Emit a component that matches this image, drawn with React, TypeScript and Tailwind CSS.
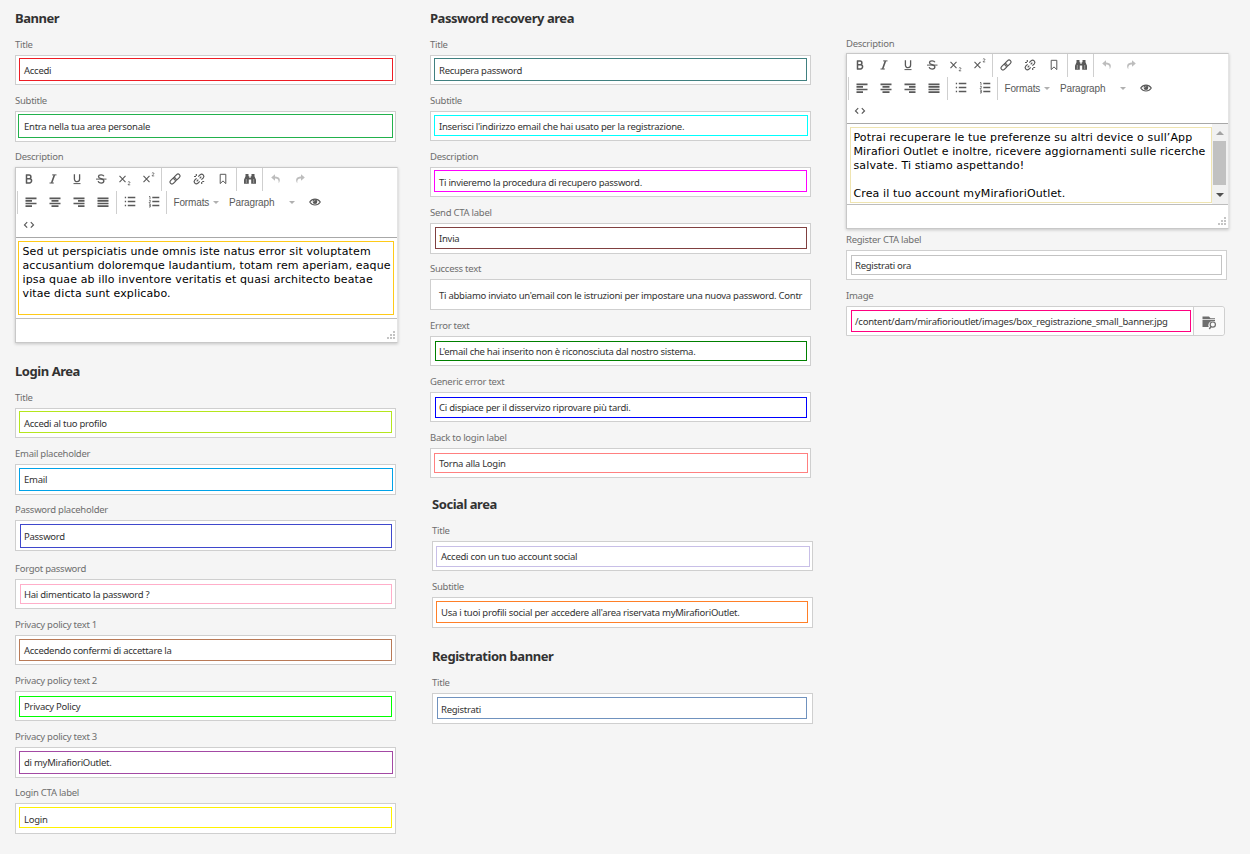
import type { ReactNode } from "react";

type FieldProps = {
  label: string;
  value: string;
  /** Box height and space below it */
  box: string;
  /** Margins and colour of the highlight frame inside the box */
  frame: string;
  text?: string;
};

const labelClass =
  "h-5 whitespace-nowrap text-[9.5px] leading-[20px] tracking-[-0.26px] text-[#6e6e6e]";
const valueClass =
  "[grid-area:1/1] whitespace-nowrap text-[9.5px] leading-[15px] text-[#323232]";

function Field({ label, value, box, frame, text = "mt-2" }: FieldProps) {
  return (
    <div>
      <div className={labelClass}>{label}</div>
      <div className={`grid w-[381px] border border-[#cfcfcf] bg-white ${box}`}>
        <div className={`[grid-area:1/1] border ${frame}`} />
        <div className={`${valueClass} ml-2 mr-1.5 tracking-[-0.26px] ${text}`}>{value}</div>
      </div>
    </div>
  );
}

function Heading({ children }: { children: ReactNode }) {
  return (
    <h2 className="h-[18px] whitespace-nowrap text-[13px] font-bold leading-[18px] tracking-[-0.45px] text-[#323232]">
      {children}
    </h2>
  );
}

function Icon({ children, faded }: { children: ReactNode; faded?: boolean }) {
  return (
    <span
      className={`flex h-[23px] w-6 shrink-0 items-start justify-center pt-[3px] ${
        faded ? "text-[#bdbdbd]" : "text-[#595959]"
      }`}
    >
      <svg
        width="16"
        height="16"
        viewBox="0 0 16 16"
        fill="none"
        stroke="currentColor"
        strokeWidth="1.4"
      >
        {children}
      </svg>
    </span>
  );
}

function Sep({ className = "" }: { className?: string }) {
  return <span className={`mr-px h-[23px] w-px shrink-0 bg-[#cfcfcf] ${className}`} />;
}

function Caret() {
  return (
    <svg width="6" height="3" viewBox="0 0 6 3" fill="#b0b0b0">
      <path d="M0 0h6L3 3z" />
    </svg>
  );
}

function Toolbar() {
  return (
    <div className="h-[70px] border-b border-[#a8a8a8] pl-px">
      <div className="flex h-[23px]">
        <Icon>
          <path d="M5.5 3.500v9M5 4.100h3.100a1.800 1.800 0 0 1 0 3.600H5.500M8.100 7.700h.4a2.100 2.100 0 0 1 0 4.200H5" strokeWidth="1.500" />
        </Icon>
        <Icon>
          <path d="M7.200 3.900h4.300M4.500 12h4.300" strokeWidth="1" />
          <path d="M9.400 4L6.600 12" strokeWidth="1.600" />
        </Icon>
        <Icon>
          <path d="M5.400 3.300v4.800a2.600 2.600 0 0 0 5.200 0V3.300" strokeWidth="1.300" />
          <path d="M4.500 12.600h7" strokeWidth="1" />
        </Icon>
        <Icon>
          <path d="M10.900 5.300C10.500 4.300 9.500 3.900 8.100 3.900 6.500 3.900 5.500 4.600 5.500 5.700c0 2.700 5.400 1.400 5.400 4.100 0 1.400-1.100 2.300-2.800 2.300-1.600 0-2.700-.6-3-1.900" strokeWidth="1.300" />
          <path d="M3 8.100h10.500" strokeWidth="1" />
        </Icon>
        <Icon>
          <path d="M2.500 4.800l6 6.300M8.500 4.800l-6 6.300" strokeWidth="1.100" />
          <path d="M10.900 11.200c.4-.8 2-.7 2 .2 0 .9-1.600 1.400-1.900 2.400h2.200" strokeWidth=".8" />
        </Icon>
        <Icon>
          <path d="M2.500 4.800l6 6.300M8.500 4.800l-6 6.300" strokeWidth="1.100" />
          <path d="M10.900 2.300c.4-.8 2-.7 2 .2 0 .9-1.600 1.400-1.900 2.400h2.200" strokeWidth=".8" />
        </Icon>
        <Sep />
        <Icon>
          <rect x="6.300" y="4.100" width="7.200" height="4" rx="2" transform="rotate(-45 9.900 6.100)" strokeWidth="1.200" />
          <rect x="2.500" y="7.900" width="7.200" height="4" rx="2" transform="rotate(-45 6.100 9.900)" strokeWidth="1.200" />
        </Icon>
        <Icon>
          <path d="M7.300 5.600l1.900-1.900a2.200 2.200 0 0 1 3.100 3.100L10.400 8.700M8.700 10.400l-1.900 1.900a2.200 2.200 0 0 1-3.100-3.100L5.600 7.300M5.700 10.300l1.600-1.600M8.700 7.300l1.600-1.600M5.300 3v2M3 5.500h2M10.700 11v2M11.200 10.500h2" strokeWidth="1.200" />
        </Icon>
        <Icon>
          <path d="M5.200 3.300h5.600v9.300L8 9.900l-2.800 2.700z" strokeWidth="1" />
        </Icon>
        <Sep className="ml-px" />
        <Icon>
          <path d="M3.500 3h3v2.200h.8v1.600h1.400V5.200h.8V3h3v2.200l1.500 3.600v4H9.200V8.600H6.800v4.200H2V8.800l1.500-3.600z" fill="currentColor" stroke="none" />
          <path d="M4.300 8v4M11.700 8v4" stroke="white" strokeWidth=".4" />
        </Icon>
        <Sep />
        <Icon faded>
          <path d="M7 3.200L3.200 6.500 7 9.800V7.600c2.600 0 4.100 1.300 3.600 4.700C13 9.200 12 5.400 7 5.400z" fill="currentColor" stroke="none" />
        </Icon>
        <Icon faded>
          <path d="M9 3.200l3.800 3.300L9 9.800V7.600c-2.600 0-4.100 1.300-3.600 4.700C3 9.200 4 5.400 9 5.400z" fill="currentColor" stroke="none" />
        </Icon>
      </div>
      <div className="flex h-[23px]">
        <Sep />
        <Icon>
          <path d="M2.500 4.300h11M2.500 6.900h6.500M2.500 9.500h11M2.500 12.100h6.500" strokeWidth="1.700" />
        </Icon>
        <Icon>
          <path d="M2.500 4.300h11M4.500 6.900h7M2.500 9.500h11M4.500 12.100h7" strokeWidth="1.700" />
        </Icon>
        <Icon>
          <path d="M2.500 4.300h11M7 6.900h6.500M2.500 9.500h11M7 12.100h6.500" strokeWidth="1.700" />
        </Icon>
        <Icon>
          <path d="M2.500 4.300h11M2.500 6.900h11M2.500 9.500h11M2.500 12.100h11" strokeWidth="1.700" />
        </Icon>
        <Sep className="ml-px" />
        <Icon>
          <path d="M5.800 3.500h7.500M5.800 7.500h7.500M5.800 11.500h7.500M2.800 3.500h1.300M2.800 7.500h1.300M2.800 11.500h1.300" strokeWidth="1.300" />
        </Icon>
        <Icon>
          <path d="M6.300 3.500h7M6.300 7.500h7M6.300 11.500h7" strokeWidth="1.300" />
          <path d="M3 2.500h1V5M3 6.200h1.300v1.200L3 8.700h1.500M3 10h1.300v3H3M3.300 11.500h1" strokeWidth=".8" />
        </Icon>
        <Sep />
        <div className="ml-[5.5px] flex w-[55.5px] items-center gap-[3px] whitespace-nowrap font-['Liberation_Sans',sans-serif] text-[10px] tracking-[-0.15px] text-[#595959]">
          <span className="w-9">Formats</span>
          <Caret />
        </div>
        <div className="flex w-[66px] items-center justify-between whitespace-nowrap font-['Liberation_Sans',sans-serif] text-[10px] tracking-[-0.15px] text-[#595959]">
          Paragraph
          <Caret />
        </div>
        <span className="w-[7.5px]" />
        <Icon>
          <path d="M2.700 8c2.600-3.900 8-3.900 10.600 0-2.600 3.900-8 3.900-10.600 0z" strokeWidth="1.100" />
          <circle cx="8" cy="7.800" r="2.300" fill="currentColor" stroke="none" />
          <path d="M6.700 7.500l1-1" stroke="white" strokeWidth=".9" />
        </Icon>
      </div>
      <div className="flex h-[23px]">
        <Icon>
          <path d="M6.200 5.100L3.500 7.900l2.700 2.800M9.800 5.100l2.700 2.800-2.700 2.800" strokeWidth="1.200" />
        </Icon>
      </div>
    </div>
  );
}

function Editor({ children }: { children: ReactNode }) {
  return (
    <div className="flex h-44 w-[383px] flex-col border border-[#c8c8c8] border-r-[#e4e4e4] bg-white shadow-[0_1px_3px_rgba(0,0,0,0.2)]">
      <Toolbar />
      <div className="flex h-[81px] border-b border-[#bdbdbd] font-['DejaVu_Sans',sans-serif] text-[11px] leading-[14px] tracking-[0.12px] text-black">
        {children}
      </div>
      <div className="flex flex-1 items-end justify-end pb-[3px] pr-[2px]">
        <svg width="8" height="8" viewBox="0 0 8 8" fill="#c4c4c4">
          <path d="M6 0h2v2H6zM6 3h2v2H6zM6 6h2v2H6zM3 3h2v2H3zM3 6h2v2H3zM0 6h2v2H0z" />
        </svg>
      </div>
    </div>
  );
}

export default function App() {
  return (
    <div className="flex h-[854px] w-[1250px] overflow-hidden bg-[#f5f5f5] pl-[15px] font-['Noto_Sans',sans-serif]">
      <div className="w-[415px] shrink-0 pt-[9px]">
        <Heading>Banner</Heading>
        <div className="h-2" />
        <Field label="Title" value="Accedi" box="h-[30px] mb-1.5" frame="ml-[3px] mr-[2px] mt-[2px] mb-[3px] border-[#ed1c24]" text="mt-[7px]" />
        <Field label="Subtitle" value="Entra nella tua area personale" box="h-[31px] mb-[5px]" frame="ml-[2px] mr-[2px] mt-[2px] mb-[3px] border-[#22b14c]" text="mt-[7px]" />
        <div className={labelClass}>Description</div>
        <Editor>
          <div className="mb-[3px] ml-[2px] mr-[3px] mt-[3px] flex-1 whitespace-nowrap border border-[#ffca18] pl-[3.5px] pt-[3px]">
            Sed ut perspiciatis unde omnis iste natus error sit voluptatem
            <br />
            accusantium doloremque laudantium, totam rem aperiam, eaque
            <br />
            ipsa quae ab illo inventore veritatis et quasi architecto beatae
            <br />
            vitae dicta sunt explicabo.
          </div>
        </Editor>
        <div className="h-[19px]" />
        <Heading>Login Area</Heading>
        <div className="h-2" />
        <Field label="Title" value="Accedi al tuo profilo" box="h-[30px] mb-1.5" frame="ml-[3px] mr-[3px] mt-[2px] mb-[4px] border-[#b5e61d]" text="mt-[7px]" />
        <Field label="Email placeholder" value="Email" box="h-[31px] mb-[5px]" frame="ml-[3px] mr-[2px] mt-[3px] mb-[3px] border-[#00a2e8]" text="mt-[7px]" />
        <Field label="Password placeholder" value="Password" box="h-[31px] mb-2" frame="ml-[4px] mr-[3px] mt-[3px] mb-[2px] border-[#3f48cc]" />
        <Field label="Forgot password" value="Hai dimenticato la password ?" box="h-[30px] mb-1.5" frame="ml-[4px] mr-[3px] mt-[4px] mb-[4px] border-[#ffaec9]" text="mt-[7px]" />
        <Field label="Privacy policy text 1" value="Accedendo confermi di accettare la" box="h-[30px] mb-1.5" frame="ml-[3px] mr-[3px] mt-[3px] mb-[3px] border-[#b97a57]" text="mt-[7px]" />
        <Field label="Privacy policy text 2" value="Privacy Policy" box="h-[30px] mb-1.5" frame="ml-[3px] mr-[3px] mt-[4px] mb-[3px] border-[#00ff00]" text="mt-[7px]" />
        <Field label="Privacy policy text 3" value="di myMirafioriOutlet." box="h-[31px] mb-[5px]" frame="ml-[3px] mr-[2px] mt-[3px] mb-[3px] border-[#a349a4]" text="mt-[7px]" />
        <Field label="Login CTA label" value="Login" box="h-[31px]" frame="ml-[3px] mr-[3px] mt-[3px] mb-[5px] border-[#fff200]" />
      </div>

      <div className="w-[416px] shrink-0 pt-[9px]">
        <Heading>Password recovery area</Heading>
        <div className="h-2" />
        <Field label="Title" value="Recupera password" box="h-[30px] mb-1.5" frame="ml-[3px] mr-[3px] mt-[2px] mb-[3px] border-[#408080]" text="mt-[7px]" />
        <Field label="Subtitle" value="Inserisci l'indirizzo email che hai usato per la registrazione." box="h-[30px] mb-1.5" frame="ml-[3px] mr-[2px] mt-[3px] mb-[4px] border-[#00ffff]" text="mt-[7px]" />
        <Field label="Description" value="Ti invieremo la procedura di recupero password." box="h-[30px] mb-1.5" frame="ml-[3px] mr-[3px] mt-[2px] mb-[4px] border-[#ff00ff]" text="mt-[7px]" />
        <Field label="Send CTA label" value="Invia" box="h-[31px] mb-[5px]" frame="ml-[4px] mr-[3px] mt-[3px] mb-[4px] border-[#804040]" text="mt-[7px]" />
        <Field label="Success text" value="Ti abbiamo inviato un'email con le istruzioni per impostare una nuova password. Contr" box="h-[31px] mb-1.5" frame="m-[3px] border-white" />
        <Field label="Error text" value="L'email che hai inserito non è riconosciuta dal nostro sistema." box="h-[30px] mb-1.5" frame="ml-[4px] mr-[3px] mt-[4px] mb-[4px] border-[#008000]" text="mt-[7px]" />
        <Field label="Generic error text" value="Ci dispiace per il disservizo riprovare più tardi." box="h-[30px] mb-1.5" frame="ml-[4px] mr-[3px] mt-[4px] mb-[3px] border-[#0000ff]" text="mt-[7px]" />
        <Field label="Back to login label" value="Torna alla Login" box="h-[30px]" frame="ml-[3px] mr-[2px] mt-[4px] mb-[4px] border-[#ff8080]" text="mt-[7px]" />
        <div className="ml-[2px] mt-[17px]">
          <Heading>Social area</Heading>
          <div className="h-2" />
          <Field label="Title" value="Accedi con un tuo account social" box="h-[30px] mb-1.5" frame="ml-[3px] mr-[2px] mt-[4px] mb-[3px] border-[#c8bfe7]" text="mt-[7px]" />
          <Field label="Subtitle" value="Usa i tuoi profili social per accedere all'area riservata myMirafioriOutlet." box="h-[31px] mb-[19px]" frame="ml-[3px] mr-[4px] mt-[3px] mb-[4px] border-[#ff7f27]" text="mt-[7px]" />
          <Heading>Registration banner</Heading>
          <div className="h-2" />
          <Field label="Title" value="Registrati" box="h-[31px]" frame="ml-[4px] mr-[5px] mt-[3px] mb-[4px] border-[#7092be]" />
        </div>
      </div>

      <div className="w-[383px] shrink-0 pt-[34px]">
        <div className={labelClass}>Description</div>
        <div className="-mt-px">
          <Editor>
            <div className="mb-px ml-[3px] mt-[3px] w-[362px] shrink-0 whitespace-nowrap border border-[#efe4b0] pl-[2.5px] pt-[3px]">
              Potrai recuperare le tue preferenze su altri device o sull’App
              <br />
              Mirafiori Outlet e inoltre, ricevere aggiornamenti sulle ricerche
              <br />
              salvate. Ti stiamo aspettando!
              <br />
              <br />
              Crea il tuo account myMirafioriOutlet.
            </div>
            <div className="flex w-[16px] shrink-0 flex-col items-center bg-[#f1f1f1] pr-px pt-[7px]">
              <svg className="shrink-0" width="8" height="4" viewBox="0 0 8 4" fill="#a3a3a3">
                <path d="M0 4h8L4 0z" />
              </svg>
              <div className="mt-[6px] h-11 w-[13px] shrink-0 bg-[#c1c1c1]" />
              <svg className="mt-[8px] shrink-0" width="8" height="4" viewBox="0 0 8 4" fill="#505050">
                <path d="M0 0h8L4 4z" />
              </svg>
            </div>
          </Editor>
        </div>
        <div className="h-px" />
        <Field label="Register CTA label" value="Registrati ora" box="h-[30px] mb-1.5" frame="ml-[4px] mr-[4px] mt-[4px] mb-[4px] border-[#c3c3c3]" text="mt-[7px]" />
        <div className={labelClass}>Image</div>
        <div className="flex h-[30px] w-[379px] rounded-r-[3px] border border-[#cfcfcf] bg-white">
          <div className="grid w-[347px] shrink-0 border-r border-[#cfcfcf]">
            <div className="mb-[3px] ml-[4px] mr-[2px] mt-[3px] border border-[#ff0080] [grid-area:1/1]" />
            <div className={`${valueClass} ml-2 mt-[7px] tracking-[-0.21px]`}>
              /content/dam/mirafiorioutlet/images/box_registrazione_small_banner.jpg
            </div>
          </div>
          <div className="flex flex-1 items-center justify-center rounded-r-[3px] bg-[#fafafa] pt-[3px]">
            <svg width="15" height="14" viewBox="0 0 15 14" fill="none">
              <path d="M.5.5H7l1.500 1.700H13v1H.5zM.5 4H13v1.200H10A4 4 0 0 0 6.700 11H.5z" fill="#6e6e6e" />
              <circle cx="10.800" cy="8.600" r="2.600" stroke="#6e6e6e" strokeWidth="1.200" />
              <path d="M9 10.600L7.300 13" stroke="#6e6e6e" strokeWidth="1.500" />
            </svg>
          </div>
        </div>
      </div>
    </div>
  );
}
